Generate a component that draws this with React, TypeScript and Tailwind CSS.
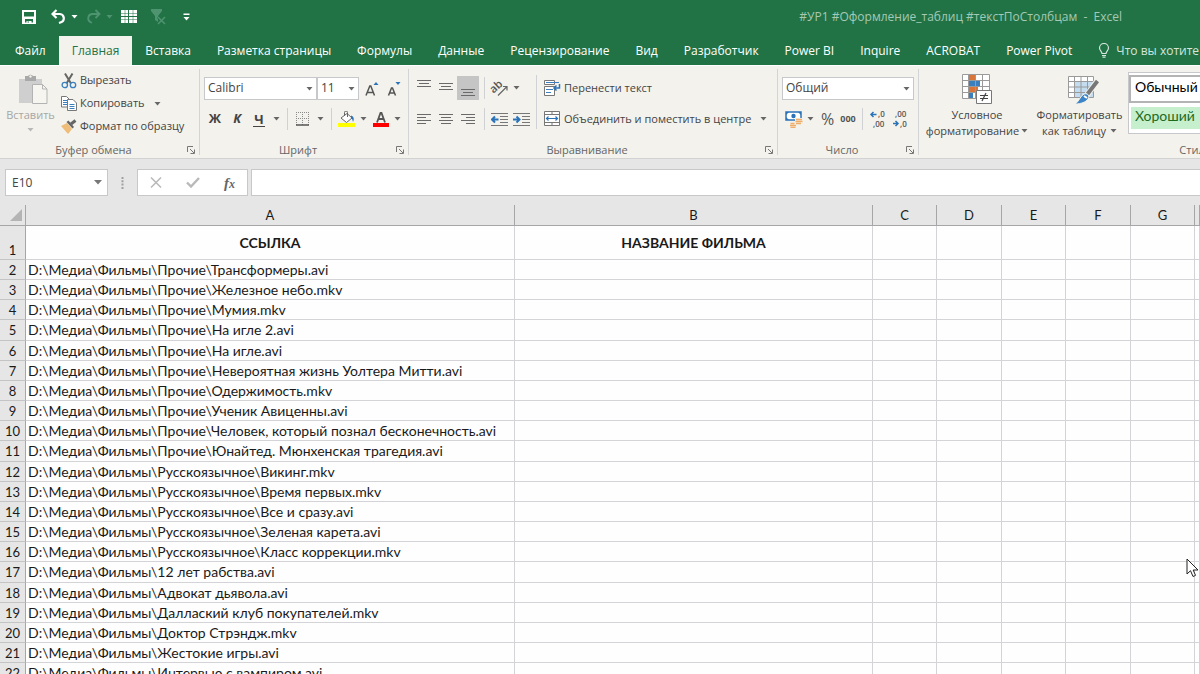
import type { ReactNode } from "react";
import clsx from "clsx";

// Data
const TABS = [
  "Файл",
  "Главная",
  "Вставка",
  "Разметка страницы",
  "Формулы",
  "Данные",
  "Рецензирование",
  "Вид",
  "Разработчик",
  "Power BI",
  "Inquire",
  "ACROBAT",
  "Power Pivot",
];

const COLUMNS = ["A", "B", "C", "D", "E", "F", "G", ""];

const FILES = [
  "D:\\Медиа\\Фильмы\\Прочие\\Трансформеры.avi",
  "D:\\Медиа\\Фильмы\\Прочие\\Железное небо.mkv",
  "D:\\Медиа\\Фильмы\\Прочие\\Мумия.mkv",
  "D:\\Медиа\\Фильмы\\Прочие\\На игле 2.avi",
  "D:\\Медиа\\Фильмы\\Прочие\\На игле.avi",
  "D:\\Медиа\\Фильмы\\Прочие\\Невероятная жизнь Уолтера Митти.avi",
  "D:\\Медиа\\Фильмы\\Прочие\\Одержимость.mkv",
  "D:\\Медиа\\Фильмы\\Прочие\\Ученик Авиценны.avi",
  "D:\\Медиа\\Фильмы\\Прочие\\Человек, который познал бесконечность.avi",
  "D:\\Медиа\\Фильмы\\Прочие\\Юнайтед. Мюнхенская трагедия.avi",
  "D:\\Медиа\\Фильмы\\Русскоязычное\\Викинг.mkv",
  "D:\\Медиа\\Фильмы\\Русскоязычное\\Время первых.mkv",
  "D:\\Медиа\\Фильмы\\Русскоязычное\\Все и сразу.avi",
  "D:\\Медиа\\Фильмы\\Русскоязычное\\Зеленая карета.avi",
  "D:\\Медиа\\Фильмы\\Русскоязычное\\Класс коррекции.mkv",
  "D:\\Медиа\\Фильмы\\12 лет рабства.avi",
  "D:\\Медиа\\Фильмы\\Адвокат дьявола.avi",
  "D:\\Медиа\\Фильмы\\Даллаский клуб покупателей.mkv",
  "D:\\Медиа\\Фильмы\\Доктор Стрэндж.mkv",
  "D:\\Медиа\\Фильмы\\Жестокие игры.avi",
  "D:\\Медиа\\Фильмы\\Интервью с вампиром.avi",
];

// Small shared pieces
function Arrow({ className = "text-[#666666]" }: { className?: string }) {
  return (
    <svg width="7" height="4" viewBox="0 0 7 4" className={clsx("shrink-0", className)} aria-hidden="true">
      <path d="M0.5 0h6L3.5 3.5z" fill="currentColor" />
    </svg>
  );
}

function Separator({ className = "h-[22px]" }: { className?: string }) {
  return <div className={clsx("w-px shrink-0 bg-[#cfd1d4]", className)} />;
}

interface IconButtonProps {
  label: string;
  className?: string;
  children: ReactNode;
}

function IconButton({ label, className, children }: IconButtonProps) {
  return (
    <button type="button" aria-label={label} className={clsx("flex shrink-0 items-center justify-center", className)}>
      {children}
    </button>
  );
}

function Combo({ label, value, className }: { label: string; value: string; className: string }) {
  return (
    <div className={clsx("relative h-[23px] shrink-0", className)}>
      <select
        aria-label={label}
        className="block h-full w-full appearance-none rounded-none border border-[#c6c8cb] bg-white pb-px pl-[3px] text-[12px] leading-[18px] text-[#444444] outline-none"
      >
        <option>{value}</option>
      </select>
      <div className="pointer-events-none absolute inset-y-0 right-1 flex items-center">
        <Arrow />
      </div>
    </div>
  );
}

interface GroupProps {
  title: string;
  launcher?: boolean;
  className?: string;
  children: ReactNode;
}

function Group({ title, launcher = true, className, children }: GroupProps) {
  return (
    <section aria-label={title} className={clsx("flex shrink-0 flex-col border-r border-[#d2d4d6]", className)}>
      <div className="flex h-[75px]">{children}</div>
      <div className="flex h-[11px] items-center">
        <span className="flex-1 text-center text-[11px] leading-[14px] text-[#666666]">{title}</span>
        {launcher ? (
          <IconButton label={`Параметры: ${title}`} className="mr-1">
            <svg width="8" height="8" viewBox="0 0 8 8" fill="none" stroke="#777777" aria-hidden="true">
              <path d="M0.5 6V0.5H6" />
              <path d="M3 3l4 4M7.5 3.5v4h-4" />
            </svg>
          </IconButton>
        ) : (
          <span className="w-0" />
        )}
      </div>
    </section>
  );
}

// Horizontal lines of given [x, y, width], used by all alignment icons
function Lines({ rows, width = 14, height = 12 }: { rows: number[][]; width?: number; height?: number }) {
  return (
    <svg width={width} height={height} viewBox={`0 0 ${width} ${height}`} aria-hidden="true">
      {rows.map(([x, y, w]) => (
        <rect key={y} x={x} y={y} width={w} height="1" fill="#6a6a6a" />
      ))}
    </svg>
  );
}

function IndentIcon({ flip = false }: { flip?: boolean }) {
  return (
    <svg width="17" height="15" viewBox="0 0 17 15" aria-hidden="true">
      <path d="M0 1.5h17M9 4.5h8M9 7.5h8M9 10.5h8M0 13.5h17" stroke="#777777" />
      <path
        d={flip ? "M0 7.5h6M3.500 4.5l3 3-3 3" : "M7.500 7.5H1.500M4 4.5l-3 3 3 3"}
        fill="none"
        stroke="#2b73b8"
        strokeWidth="2"
      />
    </svg>
  );
}

function TitleBar() {
  return (
    <div className="flex h-9 items-center text-white">
      <div className="flex h-full items-center pl-[22px] pb-[3px]">
        <IconButton label="Сохранить">
          <svg width="14" height="14" viewBox="0 0 14 14" aria-hidden="true">
            <path d="M0 0h14v14H0zM2 2v4.500h10V2zM3 9v3.500h1.500V11h5v1.500H11V9z" fill="currentColor" fillRule="evenodd" />
            <path d="M5.500 11.500h1.500v1h-1.500z" fill="#217346" />
          </svg>
        </IconButton>
        <IconButton label="Отменить" className="ml-[15px] gap-[5px]">
          <svg width="15" height="15" viewBox="0 0 15 15" fill="none" stroke="currentColor" strokeWidth="2.200" aria-hidden="true">
            <path d="M1.500 5H9a4.300 4.300 0 0 1 1 8.300L8 14" />
            <path d="M5.500 1L1.500 5l4 4" />
          </svg>
          <Arrow className="text-white" />
        </IconButton>
        <IconButton label="Вернуть" className="ml-2 gap-[5px] text-[#4f9470]">
          <svg width="15" height="15" viewBox="0 0 15 15" fill="none" stroke="currentColor" strokeWidth="1.800" aria-hidden="true">
            <path d="M13.500 5H6a4.300 4.300 0 0 0-1 8.300L6 13.600" />
            <path d="M9.500 1l4 4-4 4" />
          </svg>
          <Arrow className="text-[#4f9470]" />
        </IconButton>
        <IconButton label="Закрепить области" className="ml-2">
          <svg width="16" height="13" viewBox="0 0 16 13" fill="currentColor" aria-hidden="true">
            <path d="M0 0h7v6H0zM8 0h8v6H8zM0 7h7v6H0zM8 7h8v6H8z" />
            <path d="M0 3.500h16M0 9.500h16M4 0v13M12 0v13" stroke="#217346" strokeWidth=".5" />
          </svg>
        </IconButton>
        <IconButton label="Очистить фильтр" className="ml-[14px] text-[#4f9470]">
          <svg width="15" height="16" viewBox="0 0 15 16" aria-hidden="true">
            <path d="M0 0h11v2L7 7v6l-3-2V7L0 2z" fill="currentColor" />
            <path d="M7 8l7 7M14 8l-7 7" stroke="#217346" strokeWidth="3" />
            <path d="M7 8l7 7M14 8l-7 7" stroke="currentColor" strokeWidth="1.500" />
          </svg>
        </IconButton>
        <IconButton label="Настройка панели быстрого доступа" className="ml-[17px]">
          <svg width="7" height="8" viewBox="0 0 7 8" fill="currentColor" aria-hidden="true">
            <path d="M0.500 0.500h6v1.500h-6zM0.500 4h6L3.500 7.500z" />
          </svg>
        </IconButton>
      </div>
      <h1 className="ml-auto pr-[78px] pb-[3px] text-[12px] leading-4 whitespace-pre text-[#a4c9b4]">
        {"#УР1 #Оформление_таблиц #текстПоСтолбцам  -  Excel"}
      </h1>
    </div>
  );
}

function TabBar() {
  return (
    <nav className="flex h-[29px] items-stretch overflow-hidden pl-0.5 text-[12px] whitespace-nowrap text-white">
      {TABS.map((tab) => (
        <button
          key={tab}
          type="button"
          className={clsx(
            "shrink-0 px-[13px] leading-[28px]",
            tab === "Главная" && "bg-[#f3f2ec] text-[#217346]"
          )}
        >
          {tab}
        </button>
      ))}
      <button type="button" className="flex shrink-0 items-center gap-1.5 pl-[13px] text-[#d5e6dc]">
        <svg width="12" height="15" viewBox="0 0 12 15" fill="none" stroke="currentColor" strokeWidth="1.200" aria-hidden="true">
          <path d="M4 10.500C4 8.500 1.500 7.500 1.500 5a4.500 4.500 0 0 1 9 0c0 2.500-2.500 3.500-2.500 5.500zM4 12.500h4M4.500 14.200h3" />
        </svg>
        Что вы хотите сделать?
      </button>
    </nav>
  );
}

function ClipboardGroup() {
  return (
    <Group title="Буфер обмена" className="w-[200px]">
      <button type="button" className="flex w-[61px] shrink-0 flex-col items-center pt-1 text-[11px] text-[#a6a6a6]">
        <svg width="31" height="32" viewBox="0 0 31 32" className="ml-1" aria-hidden="true">
          <path d="M2 6h23v24H2z" fill="#cfcfcf" />
          <path d="M8 3h3a3 3 0 0 1 5 0h3v5H8z" fill="#a9a9a9" />
          <circle cx="13.500" cy="3.500" r="1.200" fill="#f3f2ec" />
          <path d="M15.500 11.500h10l4.500 4.500v14.500H15.500z" fill="#f6f5f0" stroke="#b3b3b3" />
          <path d="M25.500 11.500V16H30" fill="none" stroke="#b3b3b3" />
        </svg>
        <span className="pt-0.5 leading-4">Вставить</span>
        <span className="pt-[5px]">
          <Arrow className="text-[#b8b8b8]" />
        </span>
      </button>
      <div className="flex flex-col text-[11px] text-[#444444]">
        <button type="button" className="flex h-[23px] items-center gap-[3px] whitespace-nowrap">
          <svg width="16" height="16" viewBox="0 0 16 16" fill="none" aria-hidden="true">
            <path d="M4 0.500l6 10M11.500 0.500l-6 10" stroke="#666666" strokeWidth="2" />
            <circle cx="3.800" cy="12" r="2.700" stroke="#3b7fbf" strokeWidth="1.300" />
            <circle cx="12" cy="12" r="2.700" stroke="#3b7fbf" strokeWidth="1.300" />
          </svg>
          Вырезать
        </button>
        <button type="button" className="flex h-[23px] items-center gap-[3px] whitespace-nowrap">
          <svg width="16" height="15" viewBox="0 0 16 15" aria-hidden="true">
            <path d="M0.500 0.500h5L8.500 3.500v7.500h-8z" fill="#fff" stroke="#777777" />
            <path d="M2 4.500h4M2 6.500h4M2 8.500h4" stroke="#3b7fbf" />
            <path d="M6.500 3.500h5.500l3.500 3.500v7.500h-9z" fill="#fff" stroke="#777777" />
            <path d="M8.500 8.500h5M8.500 10.500h5M8.500 12.500h5" stroke="#3b7fbf" />
          </svg>
          Копировать
          <span className="pl-1.5">
            <Arrow />
          </span>
        </button>
        <button type="button" className="flex h-[23px] items-center gap-[3px] whitespace-nowrap">
          <svg width="16" height="15" viewBox="0 0 16 15" aria-hidden="true">
            <path d="M0 7l6-3 5 6-4 5z" fill="#efbd78" />
            <path d="M5.500 3l6 6.500 1.500-1.500L7.500 1.500z" fill="#666666" />
            <path d="M10 5l4.500-3.500" stroke="#666666" strokeWidth="3" />
          </svg>
          Формат по образцу
        </button>
      </div>
    </Group>
  );
}

function FontGroup() {
  return (
    <Group title="Шрифт" className="w-[209px]">
      <div className="flex flex-col gap-2 pt-2 pl-1">
        <div className="flex items-center">
          <Combo label="Шрифт" value="Calibri" className="w-[113px]" />
          <Combo label="Размер шрифта" value="11" className="w-[42px]" />
          <IconButton label="Увеличить размер шрифта" className="ml-1.5">
            <svg width="14" height="16" viewBox="0 0 14 16" fill="none" aria-hidden="true">
              <path d="M1 14.500L4.800 5h1L9.500 14.500M2.500 11.500h5.500" stroke="#555555" strokeWidth="1.500" />
              <path d="M8.500 4l2.500-3 2.500 3z" fill="#2b73b8" />
            </svg>
          </IconButton>
          <IconButton label="Уменьшить размер шрифта" className="ml-2">
            <svg width="14" height="16" viewBox="0 0 14 16" fill="none" aria-hidden="true">
              <path d="M1.500 14.500L4.500 7h1L8.500 14.500M2.500 12h5" stroke="#555555" strokeWidth="1.500" />
              <path d="M8.500 1l2.500 3 2.500-3z" fill="#2b73b8" />
            </svg>
          </IconButton>
        </div>
        <div className="flex h-[22px] items-center text-[13px] font-bold text-[#444444]">
          <IconButton label="Полужирный" className="w-[22px]">
            Ж
          </IconButton>
          <IconButton label="Курсив" className="w-[22px] italic">
            К
          </IconButton>
          <IconButton label="Подчеркнутый" className="w-[22px]">
            <span className="border-b border-[#444444] px-px leading-[14px]">Ч</span>
          </IconButton>
          <IconButton label="Виды подчеркивания" className="w-[13px]">
            <Arrow />
          </IconButton>
          <Separator className="ml-1 h-[22px]" />
          <IconButton label="Границы" className="ml-2 gap-[7px]">
            <svg width="14" height="14" viewBox="0 0 14 14" fill="none" aria-hidden="true">
              <path d="M0.500 0v13M6.500 0v13M12.500 0v13M0 0.500h13M0 6.500h13" stroke="#8a8a8a" strokeDasharray="1 1" />
              <path d="M0 13h13" stroke="#555555" strokeWidth="1.500" />
            </svg>
            <Arrow />
          </IconButton>
          <Separator className="ml-[7px] h-[22px]" />
          <IconButton label="Цвет заливки" className="ml-1.5 gap-1">
            <svg width="18" height="16" viewBox="0 0 18 16" aria-hidden="true">
              <path d="M3 7l6-4.500L14 7 8.500 11.500z" fill="#fff" stroke="#666666" />
              <path d="M6.500 5V1.500a1.500 1.500 0 0 1 3 0V6" fill="none" stroke="#666666" />
              <path d="M13 4.500c3 1 3.500 3.500 2 6.500-.500-2.500-1-3.500-2-4z" fill="#2b73b8" />
              <path d="M0 12h17v4H0z" fill="#ffff00" />
            </svg>
            <Arrow />
          </IconButton>
          <IconButton label="Цвет текста" className="ml-1.5 gap-[5px]">
            <svg width="16" height="16" viewBox="0 0 16 16" aria-hidden="true">
              <path d="M4 11.500L7.500 2h1L12 11.500M5 8h6" fill="none" stroke="#555555" strokeWidth="1.800" />
              <path d="M0 12h16v4H0z" fill="#ff0000" />
            </svg>
            <Arrow />
          </IconButton>
        </div>
      </div>
    </Group>
  );
}

function AlignmentGroup() {
  return (
    <Group title="Выравнивание" className="w-[369px]">
      <div className="flex flex-col gap-[7px] pt-[7px] pl-1">
        <div className="flex h-6 items-center">
          <IconButton label="По верхнему краю" className="h-6 w-[22px] pb-2">
            <Lines rows={[[0, 1, 14], [2, 4, 10], [0, 7, 14]]} height={11} />
          </IconButton>
          <IconButton label="По середине" className="h-6 w-[22px] pb-1">
            <Lines rows={[[0, 2, 14], [2, 5, 10], [0, 8, 14]]} height={11} />
          </IconButton>
          <IconButton label="По нижнему краю" className="h-6 w-[22px] bg-[#c5c5c5] pt-2">
            <Lines rows={[[0, 2, 14], [2, 5, 10], [0, 8, 14]]} height={11} />
          </IconButton>
          <Separator className="ml-[5px] h-[22px]" />
          <IconButton label="Ориентация" className="ml-1.5 gap-1">
            <svg width="18" height="17" viewBox="0 0 18 17" className="overflow-visible" aria-hidden="true">
              <text x="0" y="11" fontSize="11" fontWeight="600" fill="#555555" transform="rotate(-42 5 9)">
                ab
              </text>
              <path d="M7 15.500L15.500 7M12 6.500h4v4" fill="none" stroke="#666666" strokeWidth="1.200" />
            </svg>
            <Arrow />
          </IconButton>
        </div>
        <div className="flex h-6 items-center">
          <IconButton label="По левому краю" className="h-6 w-[22px]">
            <Lines rows={[[0, 1, 14], [0, 4, 9], [0, 7, 14], [0, 10, 9]]} />
          </IconButton>
          <IconButton label="По центру" className="h-6 w-[22px]">
            <Lines rows={[[0, 1, 14], [2, 4, 10], [0, 7, 14], [2, 10, 10]]} />
          </IconButton>
          <IconButton label="По правому краю" className="h-6 w-[22px]">
            <Lines rows={[[0, 1, 14], [5, 4, 9], [0, 7, 14], [5, 10, 9]]} />
          </IconButton>
          <Separator className="ml-[5px] h-[22px]" />
          <IconButton label="Уменьшить отступ" className="ml-1.5">
            <IndentIcon />
          </IconButton>
          <IconButton label="Увеличить отступ" className="ml-[5px]">
            <IndentIcon flip />
          </IconButton>
        </div>
      </div>
      <Separator className="mt-1.5 ml-1.5 h-[54px]" />
      <div className="flex flex-col gap-[7px] pt-[7px] pl-[7px] text-[11px] whitespace-nowrap text-[#444444]">
        <button type="button" className="flex h-6 items-center gap-[3px]">
          <svg width="17" height="17" viewBox="0 0 17 17" fill="none" aria-hidden="true">
            <path d="M0.500 0.500h10v4h-10zM0.500 6.500h10v9h-10z" fill="#fff" stroke="#777777" />
            <path d="M2 2.500h13M2 9.500h7M2 12.500h5" stroke="#3b7fbf" />
            <path d="M15.500 4v4h-5M12.500 5.500l-2.500 2.500 2.500 2.500" stroke="#2b73b8" strokeWidth="1.500" />
          </svg>
          Перенести текст
        </button>
        <button type="button" className="flex h-6 items-center gap-[3px]">
          <svg width="17" height="16" viewBox="0 0 17 16" fill="none" aria-hidden="true">
            <path d="M0.500 0.500h15v14h-15zM0.500 3.500h15M0.500 11.500h15M8 0.500v3M8 11.500v3" fill="#fff" stroke="#777777" />
            <path d="M2.500 7.500h11M4.500 5.500l-2 2 2 2M11.500 5.500l2 2-2 2" stroke="#2b73b8" strokeWidth="1.200" />
          </svg>
          Объединить и поместить в центре
          <span className="pl-1.5">
            <Arrow />
          </span>
        </button>
      </div>
    </Group>
  );
}

function NumberGroup() {
  return (
    <Group title="Число" className="w-[141px]">
      <div className="flex flex-col gap-2 pt-2 pl-1">
        <Combo label="Числовой формат" value="Общий" className="w-[132px]" />
        <div className="flex h-[22px] items-center text-[#555555]">
          <IconButton label="Финансовый числовой формат" className="ml-[3px] gap-1">
            <svg width="18" height="17" viewBox="0 0 18 17" aria-hidden="true">
              <path d="M1 1h15v8H1z" fill="#fff" stroke="#2b73b8" strokeWidth="1.500" />
              <path d="M1 1h3L1 4zM16 1h-3l3 3zM1 9h3L1 6z" fill="#2b73b8" />
              <circle cx="8.500" cy="5" r="2.200" fill="#2b73b8" />
              <path d="M10 7h8v7h-5v3H4v-6h6z" fill="#f3f2ec" />
              <path d="M11 8.500h6M10.500 10.500h7M11 12.500h5M5.500 12.500h4M5 14.500h6M5.500 16.300h5" stroke="#efae69" strokeWidth="1.300" />
            </svg>
            <Arrow />
          </IconButton>
          <IconButton label="Процентный формат" className="ml-[7px] text-[16px]">
            %
          </IconButton>
          <IconButton label="Формат с разделителями" className="ml-1.5 text-[9px] font-bold">
            000
          </IconButton>
          <Separator className="ml-1.5 h-[22px]" />
          <IconButton label="Увеличить разрядность" className="ml-1.5">
            <svg width="17" height="18" viewBox="0 0 17 18" fontSize="8" fontWeight="600" fill="#555555" className="overflow-visible" aria-hidden="true">
              <text x="9" y="7">,0</text>
              <text x="4" y="17">,00</text>
              <path d="M7.500 4.500H2.500M4.500 2L2 4.500 4.500 7" fill="none" stroke="#2b73b8" strokeWidth="1.500" />
            </svg>
          </IconButton>
          <IconButton label="Уменьшить разрядность" className="ml-[5px]">
            <svg width="17" height="18" viewBox="0 0 17 18" fontSize="8" fontWeight="600" fill="#555555" className="overflow-visible" aria-hidden="true">
              <text x="4" y="7">,00</text>
              <text x="9" y="17">,0</text>
              <path d="M2 13.500h5M4.500 11L7 13.500 4.500 16" fill="none" stroke="#2b73b8" strokeWidth="1.500" />
            </svg>
          </IconButton>
        </div>
      </div>
    </Group>
  );
}

function StylesGroup() {
  return (
    <Group title="Стили" launcher={false} className="w-[554px]">
      <button type="button" className="flex w-[108px] shrink-0 flex-col items-center pt-1 pl-2 text-[11px] leading-4 whitespace-nowrap text-[#444444]">
        <svg width="32" height="32" viewBox="0 0 32 32" aria-hidden="true">
          <path d="M1.500 1.500h27v24h-27z" fill="#fff" />
          <path d="M8 1h6v6H8zM8 13h9v6H8z" fill="#d9743a" />
          <path d="M8 7h11v6H8zM8 19h4v6H8z" fill="#3b7fbf" />
          <path d="M1.500 1.500h27v24h-27zM1.500 7.500h27M1.500 13.500h27M1.500 19.500h27M7.500 1.500v24M14.500 1.500v24M21.500 1.500v24" fill="none" stroke="#9a9a9a" />
          <path d="M15.500 17.500h15v13h-15z" fill="#fff" stroke="#777777" />
          <path d="M19 22.500h8M19 25.500h8M25 20l-4 8" stroke="#444444" strokeWidth="1.200" />
        </svg>
        <span className="pt-0.5">Условное</span>
        <span className="flex items-center gap-0.5">
          форматирование
          <Arrow />
        </span>
      </button>
      <button type="button" className="flex w-[101px] shrink-0 flex-col items-center pt-1 pl-1 text-[11px] leading-4 whitespace-nowrap text-[#444444]">
        <svg width="32" height="32" viewBox="0 0 32 32" className="ml-1.5" aria-hidden="true">
          <path d="M1.500 3.500h25v21h-25z" fill="#fff" />
          <path d="M8 9h18v15H8z" fill="#c3dcf0" />
          <path d="M1.500 3.500h25v21h-25zM1.500 8.500h25M1.500 14h25M1.500 19.500h25M7.500 3.500v21M14 3.500v21M20.500 3.500v21" fill="none" stroke="#9a9a9a" />
          <path d="M31 7L20 22" stroke="#f3f2ec" strokeWidth="6" />
          <path d="M30.500 8L20.500 21" stroke="#777777" strokeWidth="4" />
          <path d="M17 21c4-1 6 2 4 5s-7 5-13 5c4-2 5-8 9-10z" fill="#3b84c8" stroke="#f3f2ec" />
          <path d="M17 23l3 2" stroke="#fff" strokeWidth="2" />
        </svg>
        <span className="pt-0.5">Форматировать</span>
        <span className="flex items-center gap-1">
          как таблицу
          <Arrow />
        </span>
      </button>
      <div className="mt-[3px] mr-1 flex h-[62px] flex-1 flex-col gap-1 border border-[#c6c8cb] bg-white pt-0.5 font-[Lato,'Noto_Sans',sans-serif] text-[14px]">
        <button type="button" className="h-[28px] w-28 border-2 border-[#b4b4b4] px-1 pb-1 text-left leading-5 text-black">
          Обычный
        </button>
        <button type="button" className="ml-0.5 h-[22px] w-28 bg-[#c6efce] px-1 pb-1 text-left leading-[18px] text-[#1c6b1f]">
          Хороший
        </button>
      </div>
    </Group>
  );
}

function FormulaBar() {
  return (
    <div className="flex items-center pt-[10px] pb-[9px] pl-[5px]">
      <div className="relative h-[27px] w-[103px] shrink-0">
        <input
          aria-label="Имя"
          defaultValue="E10"
          className="h-full w-full border border-[#c8c8c8] bg-white pl-1.5 text-[12px] text-[#444444] outline-none"
        />
        <button type="button" aria-label="Список имен" className="absolute inset-y-0 right-1.5 flex items-center">
          <svg width="8" height="5" viewBox="0 0 8 5" fill="#777777" aria-hidden="true">
            <path d="M0 0h8L4 4.500z" />
          </svg>
        </button>
      </div>
      <svg width="3" height="12" viewBox="0 0 3 12" fill="#a0a0a0" className="mx-[13px] shrink-0" aria-hidden="true">
        <path d="M0.500 0h2v2h-2zM0.500 3.300h2v2h-2zM0.500 6.600h2v2h-2zM0.500 10h2v2h-2z" />
      </svg>
      <div className="flex h-[27px] w-[111px] shrink-0 items-center justify-around border border-[#c8c8c8] bg-white">
        <IconButton label="Отмена">
          <svg width="12" height="11" viewBox="0 0 12 11" stroke="#b9b9b9" strokeWidth="1.500" aria-hidden="true">
            <path d="M1 0.500l10 10M11 0.500l-10 10" />
          </svg>
        </IconButton>
        <IconButton label="Ввод">
          <svg width="14" height="11" viewBox="0 0 14 11" fill="none" stroke="#b9b9b9" strokeWidth="2.400" aria-hidden="true">
            <path d="M1 5.500l4 4L13 1" />
          </svg>
        </IconButton>
        <IconButton label="Вставить функцию" className="font-['Liberation_Serif',serif] text-[15px] leading-4 font-bold text-[#666666] italic">
          f<span className="pt-0.5 text-[12px]">x</span>
        </IconButton>
      </div>
      <input
        aria-label="Строка формул"
        className="ml-[3px] h-[27px] min-w-0 flex-1 border border-r-0 border-[#c8c8c8] bg-white px-1 text-[12px] outline-none"
      />
    </div>
  );
}

function Sheet() {
  return (
    <table className="w-full min-w-[1200px] table-fixed border-separate border-spacing-0 font-[Lato,'Noto_Sans',sans-serif] text-[14px] text-[#1a1a1a]">
      <colgroup>
        <col className="w-[26px]" />
        <col className="w-[489px]" />
        <col className="w-[358px]" />
        <col className="w-16" />
        <col className="w-[65px]" />
        <col className="w-16" />
        <col className="w-[65px]" />
        <col className="w-16" />
        <col />
      </colgroup>
      <thead>
        <tr className="h-[21px] text-[13px] leading-[18px]">
          <th aria-label="Выделить все" className="border-r border-b border-[#a6a6a6] p-0">
            <svg width="12" height="12" viewBox="0 0 12 12" className="ml-auto mr-[3px]" aria-hidden="true">
              <path d="M12 0v12H0z" fill="#b4b4b4" />
            </svg>
          </th>
          {COLUMNS.map((column, i) => (
            <th key={i} className="border-r border-b border-[#a6a6a6] p-0 text-center font-normal">
              {column}
            </th>
          ))}
        </tr>
      </thead>
      <tbody className="bg-[#fefefe]">
        <tr className="h-[34px]">
          <th className="border-r border-b border-[#a6a6a6] border-b-[#c4c4c4] bg-[#e6e6e6] p-0 text-center align-bottom text-[13px] leading-[18px] font-normal">1</th>
          <td className="border-r border-b border-[#d4d4d8] p-0 text-center font-bold">ССЫЛКА</td>
          <td className="border-r border-b border-[#d4d4d8] p-0 text-center font-bold">НАЗВАНИЕ ФИЛЬМА</td>
          {COLUMNS.slice(2).map((_, i) => (
            <td key={i} className="border-r border-b border-[#d4d4d8] p-0" />
          ))}
        </tr>
        {FILES.map((file, i) => (
          // Rows are slightly taller than 20px, every sixth one takes the extra pixel
          <tr key={file} className={i % 6 === 3 ? "h-[21px]" : "h-5"}>
            <th className="border-r border-b border-[#a6a6a6] border-b-[#c4c4c4] bg-[#e6e6e6] p-0 text-center text-[13px] leading-[18px] font-normal">
              {i + 2}
            </th>
            <td className="border-r border-b border-[#d4d4d8] p-0 pl-0.5 leading-[18px] whitespace-nowrap">{file}</td>
            {COLUMNS.slice(1).map((_, c) => (
              <td key={c} className="border-r border-b border-[#d4d4d8] p-0" />
            ))}
          </tr>
        ))}
      </tbody>
    </table>
  );
}

export default function App() {
  return (
    <div className="relative flex h-screen flex-col overflow-hidden bg-[#e6e6e6] font-['Open_Sans','Noto_Sans',sans-serif]">
      <header className="shrink-0 bg-[#217346]">
        <TitleBar />
        <TabBar />
      </header>

      {/* Ribbon */}
      <div className="flex shrink-0 overflow-hidden border-t border-b border-t-white border-b-[#d2d2d2] bg-[#f3f2ec] pt-[3px] pb-[3px]">
        <ClipboardGroup />
        <FontGroup />
        <AlignmentGroup />
        <NumberGroup />
        <StylesGroup />
      </div>

      <FormulaBar />

      <main className="min-h-0 flex-1 overflow-hidden">
        <Sheet />
      </main>

      {/* Mouse pointer */}
      <svg width="14" height="20" viewBox="0 0 14 20" className="absolute top-[558px] right-0" aria-hidden="true">
        <path d="M1 1v15l3.500-3.300L7 18.500l2.500-1.100L7.200 12H12z" fill="#fff" stroke="#222222" />
      </svg>
    </div>
  );
}
